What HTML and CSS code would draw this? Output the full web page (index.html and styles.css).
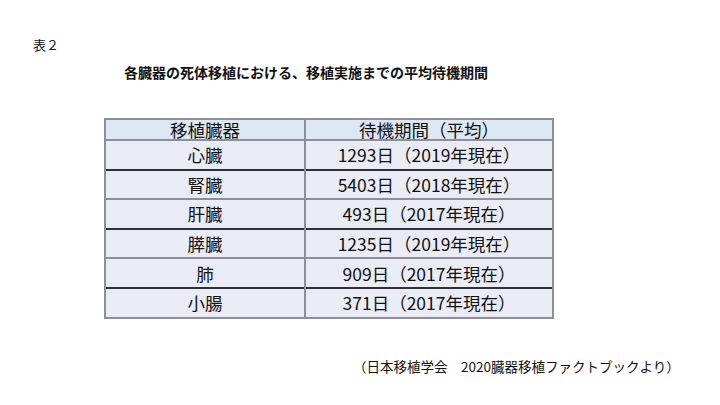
FILE: index.html
```html
<!DOCTYPE html>
<html lang="ja">
<head>
<meta charset="utf-8">
<link rel="stylesheet" href="styles.css">
</head>
<body>
<div class="page">
  <div class="label">表２</div>
  <div class="title">各臓器の死体移植における、移植実施までの平均待機期間</div>
  <table class="data">
    <thead>
      <tr class="head"><th class="c1">移植臓器</th><th class="c2">待機期間（平均）</th></tr>
    </thead>
    <tbody>
      <tr class="dark"><td>心臓</td><td>1293日（2019年現在）</td></tr>
      <tr class="gray"><td>腎臓</td><td>5403日（2018年現在）</td></tr>
      <tr class="dark"><td>肝臓</td><td>493日（2017年現在）</td></tr>
      <tr class="gray"><td>膵臓</td><td>1235日（2019年現在）</td></tr>
      <tr class="dark"><td>肺</td><td>909日（2017年現在）</td></tr>
      <tr class="gray"><td>小腸</td><td>371日（2017年現在）</td></tr>
    </tbody>
  </table>
  <div class="source">（日本移植学会　2020臓器移植ファクトブックより）</div>
</div>
</body>
</html>
```
FILE: styles.css
```css
html, body {
  margin: 0;
  padding: 0;
  background: #ffffff;
}
body {
  width: 720px;
  height: 405px;
  overflow: hidden;
  font-family: "Noto Sans CJK JP", "Noto Sans", sans-serif;
  color: #111111;
}
.page {
  display: flex;
  flex-direction: column;
  align-items: flex-start;
  padding-top: 36px;
}
.label {
  font-size: 13px;
  line-height: 18px;
  margin-left: 33px;
}
.title {
  font-size: 14px;
  line-height: 20px;
  font-weight: bold;
  margin-top: 8px;
  margin-left: 124px;
}
.data {
  margin-top: 36px;
  margin-left: 104px;
  border-collapse: collapse;
  border: 2px solid #8e8e96;
  font-size: 17.5px;
  table-layout: fixed;
  width: 450px;
}
.data th, .data td {
  padding: 0;
  text-align: center;
  font-weight: normal;
  border-left: 2px solid #8e8e96;
  border-right: 2px solid #8e8e96;
  white-space: nowrap;
}
.data .c1 { width: 198px; }
.head th {
  height: 19px;
  line-height: 19px;
  background: #dce8f4;
}
.head { border-bottom: 2px solid #8e8e96; }
.data td {
  height: 27.6px;
  line-height: 27px;
  background: #e9ebf5;
}
.dark { border-bottom: 2px solid #30303a; }
.gray { border-bottom: 2px solid #8e8e96; }
.source {
  font-size: 13.5px;
  line-height: 18px;
  margin-top: 38px;
  margin-left: 353px;
}
```
